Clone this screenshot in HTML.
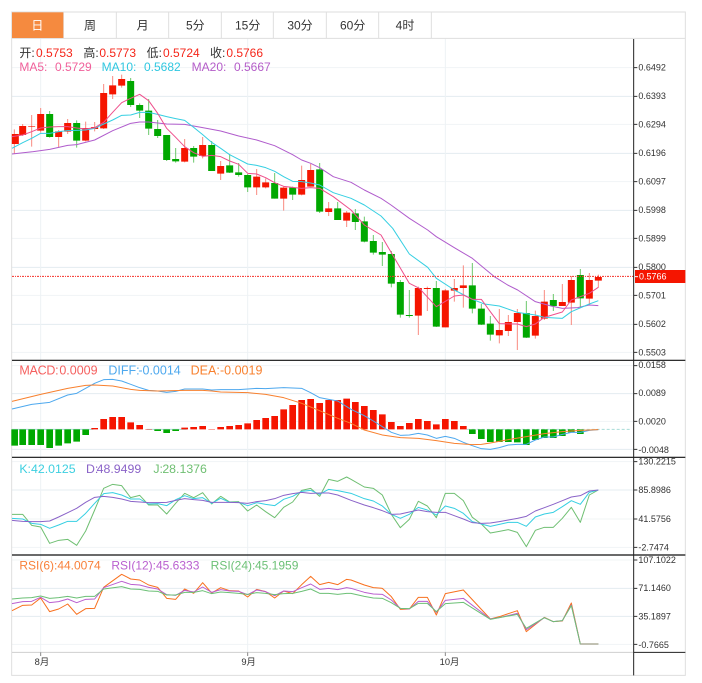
<!DOCTYPE html>
<html lang="zh"><head><meta charset="utf-8"><title>K线图</title>
<style>
html,body{margin:0;padding:0;background:#fff;width:702px;height:683px;overflow:hidden}
svg{display:block}
text{font-family:"Liberation Sans","Noto Sans CJK SC",sans-serif}
.ax text{font-size:27px;fill:#333}
.l{fill:none;stroke-width:3;stroke-linejoin:round}
</style></head><body>
<svg xmlns="http://www.w3.org/2000/svg" width="702" height="683" viewBox="0 0 2106 2049">
<!-- grid -->
<g fill="none" stroke-width="3">
<path stroke="#f1f4f6" d="M36 203H1901M36 373H1901M36 545H1901M36 715H1901M36 886H1901M36 1057H1901M36 1097H1901M36 1264H1901M36 1385H1901M36 1557H1901M36 1642H1901M36 1680H1901M36 1933H1901"/>
<path stroke="#e4ecf1" d="M36 289H1901M36 460H1901M36 631H1901M36 802H1901M36 973H1901M36 1181H1901M36 1348H1901M36 1470H1901M36 1765H1901M36 1849H1901"/>
<path stroke="#edf2f5" d="M122 116V1957M743 116V1957M1336 116V1957"/>
</g>
<!-- frame -->
<path fill="none" stroke="#dedede" stroke-width="3" d="M35 36H2056V2026H35Z"/>
<path fill="none" stroke="#dedede" stroke-width="3" d="M36 115H2056M190 36V115M349 36V115M506 36V115M664 36V115M820 36V115M979 36V115M1136 36V115M1294 36V115"/>
<rect x="36" y="37" width="154" height="77" fill="#f58a3f"/>
<g font-size="36" fill="#333" text-anchor="middle">
<text x="112" y="89" fill="#fff">日</text><text x="270" y="89">周</text><text x="428" y="89">月</text><text x="586" y="89">5分</text><text x="743" y="89">15分</text><text x="900" y="89">30分</text><text x="1058" y="89">60分</text><text x="1215" y="89">4时</text>
</g>
<!-- candle wicks -->
<path fill="none" stroke="#f98a80" stroke-width="3" d="M43 388V462M68 372V408M95 345V440M122 324V398M176 390V443M203 357V402M257 365V424M284 366V394M311 252V387M338 228V297M365 224V263M554 417V487M608 411V475M662 483V540M770 507V585M797 535V565M851 560V632M905 497V586M932 492V560M986 606V648M1040 633V681M1255 860V1005M1282 860V933M1336 867V982M1363 837V905M1390 796V923M1498 927V1030M1525 945V1008M1552 927V1050M1606 932V1016M1633 870V960M1687 852V918M1714 828V975M1768 819V915M1795 824V863"/>
<path fill="none" stroke="#6cc86c" stroke-width="3" d="M149 333V413M230 361V443M392 234V321M419 310V354M446 297V405M473 360V414M500 405V483M527 444V488M581 438V488M635 423V513M689 462V519M716 489V530M743 522V576M824 519V596M878 560V600M959 489V639M1013 606V660M1066 627V690M1093 650V727M1120 705V764M1147 726V798M1174 753V862M1201 840V953M1228 870V953M1309 843V981M1417 789V940M1444 912V975M1471 948V1022M1579 903V1014M1660 882V933M1741 807V924"/>
<!-- candle bodies -->
<path fill="none" stroke="#f51500" stroke-width="21" d="M46 402V432M68 378V405M95 378V380M122 342V392M176 394V411M203 369V395M257 384V422M284 381V387M311 279V385M338 256V283M365 237V257M554 444V485M608 435V468M662 498V521M770 530V562M797 547V562M851 563V596M905 540V584M932 510V560M986 625V636M1040 638V662M1255 864V947M1282 864V867M1336 871V982M1363 864V872M1390 856V864M1498 990V1006M1525 966V993M1552 939V966M1606 948V1007M1633 905V956M1687 906V918M1714 840V908M1768 840V896M1795 831V842"/>
<path fill="none" stroke="#00a800" stroke-width="21" d="M149 342V411M230 369V422M392 243V315M419 315V332M446 332V386M473 387V408M500 405V480M527 477V484M581 444V470M635 435V513M689 496V518M716 517V525M743 525V562M824 549V596M878 563V584M959 508V635M1013 625V660M1066 640V666M1093 664V725M1120 723V758M1147 756V764M1174 762V851M1201 846V944M1228 945V948M1309 864V980M1417 856V926M1444 926V974M1471 971V1004M1579 939V1013M1660 900V918M1741 825V895"/>
<!-- MAs -->
<path class="l" stroke="#b05ccc" d="M36 462L100 455L149 448L203 436L230 434L284 420L338 392L392 370L419 366L446 366L500 372L554 373L608 383L662 393L716 408L770 420L824 437L878 464L905 480L932 490L959 503L1000 530L1053 547L1093 570L1143 595L1173 615L1228 655L1283 690L1309 710L1363 743L1417 775L1453 805L1483 830L1523 855L1553 870L1606 905L1653 918L1687 925L1733 923L1768 915L1795 917"/>
<path class="l" stroke="#35cfe2" d="M36 445L68 428L95 415L122 400L149 400L176 395L203 392L230 391L257 390L284 385L311 372L338 360L365 346L392 345L419 337L446 337L473 343L500 350L527 356L554 361L581 382L608 404L635 427L662 445L689 464L716 478L743 492L770 496L797 503L824 514L851 530L878 544L905 545L932 549L959 555L1000 578L1053 595L1093 615L1143 648L1178 685L1228 762L1283 802L1309 835L1363 870L1417 898L1453 912L1498 918L1552 937L1606 945L1633 952L1687 955L1714 935L1768 912L1795 902"/>
<path class="l" stroke="#ee4f8c" d="M36 410L68 405L95 395L122 384L149 381L176 380L203 380L230 384L257 387L284 383L311 367L338 337L365 308L392 295L419 283L446 302L473 340L500 385L527 412L554 440L581 458L608 469L635 466L662 470L689 483L716 493L743 520L770 522L797 533L824 548L851 559L878 562L905 565L932 563L959 565L1000 590L1053 630L1093 675L1143 705L1178 765L1228 850L1258 865L1309 920L1363 888L1390 885L1417 898L1444 898L1471 935L1498 971L1552 972L1579 980L1606 972L1633 952L1687 936L1714 900L1768 880L1795 862"/>
<!-- last price line -->
<path fill="none" stroke="#f5302a" stroke-width="3" stroke-dasharray="6 3 3 3" d="M36 829H1905"/>
<!-- separators -->
<path fill="none" stroke="#111" stroke-width="3.5" d="M36 1081H2056M36 1372H2056M36 1665H2056"/>
<path fill="none" stroke="#cfcfcf" stroke-width="3" d="M36 1957H1901"/>
<path fill="none" stroke="#222" stroke-width="3" d="M1901 117V2026M1901 1957H2056"/>
<path fill="none" stroke="#888" stroke-width="3" d="M122 1957V1968M743 1957V1968M1336 1957V1968"/>

<!-- top text -->
<g font-size="36" fill="#333">
<text x="58" y="171">开:</text><text x="108" y="171" fill="#f5261a">0.5753</text>
<text x="250" y="171">高:</text><text x="298" y="171" fill="#f5261a">0.5773</text>
<text x="440" y="171">低:</text><text x="489" y="171" fill="#f5261a">0.5724</text>
<text x="630" y="171">收:</text><text x="679" y="171" fill="#f5261a">0.5766</text>
<g fill="#f0609a"><text x="58" y="213">MA5:</text><text x="165" y="213">0.5729</text></g>
<g fill="#2fc7e0"><text x="305" y="213">MA10:</text><text x="432" y="213">0.5682</text></g>
<g fill="#b45cc8"><text x="575" y="213">MA20:</text><text x="702" y="213">0.5667</text></g>
</g>

<!-- price axis -->
<g class="ax">
<path fill="none" stroke="#333" stroke-width="3" d="M1901 203H1912M1901 289H1912M1901 373H1912M1901 460H1912M1901 545H1912M1901 631H1912M1901 715H1912M1901 802H1912M1901 886H1912M1901 973H1912M1901 1057H1912M1901 1097H1912M1901 1181H1912M1901 1264H1912M1901 1348H1912M1901 1385H1912M1901 1470H1912M1901 1557H1912M1901 1642H1912M1901 1680H1912M1901 1765H1912M1901 1849H1912M1901 1933H1912"/>
<text x="1915" y="212">0.6492</text><text x="1915" y="297">0.6393</text><text x="1915" y="382">0.6294</text><text x="1915" y="468">0.6196</text><text x="1915" y="554">0.6097</text><text x="1915" y="639">0.5998</text><text x="1915" y="724">0.5899</text><text x="1915" y="810">0.5800</text><text x="1915" y="895">0.5701</text><text x="1915" y="981">0.5602</text><text x="1915" y="1066">0.5503</text>
<text x="1915" y="1104">0.0158</text><text x="1915" y="1188">0.0089</text><text x="1915" y="1273">0.0020</text><text x="1915" y="1359">-0.0048</text>
<text x="1915" y="1394">130.2215</text><text x="1915" y="1479">85.8986</text><text x="1915" y="1566">41.5756</text><text x="1915" y="1652">-2.7474</text>
<text x="1915" y="1689">107.1022</text><text x="1915" y="1773">71.1460</text><text x="1915" y="1858">35.1897</text><text x="1915" y="1944">-0.7665</text>
</g>
<rect x="1905" y="810" width="151" height="39" fill="#f51500"/>
<path stroke="#fff" stroke-width="3" d="M1905 830H1914"/>
<text x="1917" y="839" font-size="27" fill="#fff">0.5766</text>

<!-- MACD -->
<g transform="translate(0,1065)">
<g font-size="37.5">
<g fill="#f5605f"><text x="58" y="59" textLength="118">MACD:</text><text x="178" y="59">0.0009</text></g>
<g fill="#4da8ee"><text x="325" y="59">DIFF:</text><text x="415" y="59">-0.0014</text></g>
<g fill="#f8802e"><text x="572" y="59">DEA:</text><text x="660" y="59">-0.0019</text></g>
</g>
<path fill="none" stroke="#a8dcd8" stroke-width="3" d="M36 223H280M440 223H560"/>
<path fill="none" stroke="#a8dcd8" stroke-width="3" stroke-dasharray="9 6" d="M1400 223H1893"/>
<path fill="none" stroke="#f51500" stroke-width="20" d="M284 223V219M311 223V192M338 223V186M365 223V186M392 223V202M419 223V210M446 223V222M554 223V218M581 223V216M608 223V213M635 223V222M662 223V216M689 223V213M716 223V210M743 223V205M770 223V195M797 223V189M824 223V183M851 223V163M878 223V150M905 223V135M932 223V132M959 223V144M986 223V135M1013 223V135M1040 223V131M1066 223V141M1093 223V153M1120 223V165M1147 223V178M1174 223V201M1201 223V213M1228 223V204M1255 223V192M1282 223V198M1309 223V208M1336 223V192M1363 223V198M1390 223V213"/>
<path fill="none" stroke="#00a800" stroke-width="20" d="M44 223V272M68 223V270M95 223V270M122 223V270M149 223V279M176 223V272M203 223V265M230 223V260M257 223V240M473 223V228M500 223V234M527 223V228M1417 223V237M1444 223V252M1471 223V261M1498 223V261M1525 223V261M1552 223V262M1579 223V270M1606 223V255M1633 223V249M1660 223V249M1687 223V243M1714 223V232M1741 223V237"/>
<path class="l" stroke="#4da8ee" d="M36 162L95 148L149 142L203 120L230 115L257 100L284 85L311 74L338 73L365 78L392 88L419 98L446 106L473 108L500 112L527 109L554 102L608 102L635 105L662 104L716 104L770 100L797 101L851 98L905 100L932 113L959 128L986 133L1013 138L1053 163L1093 182L1120 198L1147 215L1174 232L1201 241L1228 240L1255 235L1282 240L1309 250L1336 244L1363 250L1390 262L1417 272L1444 281L1471 283L1498 278L1525 270L1552 268L1579 268L1606 255L1633 246L1660 246L1687 238L1714 232L1741 232L1768 226L1795 224"/>
<path class="l" stroke="#f8802e" d="M36 139L122 118L203 100L257 91L284 90L338 93L392 103L419 106L473 108L554 106L608 106L635 108L662 111L743 113L797 118L851 128L905 145L959 167L1013 190L1053 205L1093 225L1147 240L1201 248L1255 250L1309 257L1363 265L1417 269L1444 268L1471 264L1525 254L1579 245L1633 236L1687 230L1741 226L1795 224"/>
</g>

<!-- KDJ -->
<g transform="translate(0,1365)">
<g font-size="37">
<g fill="#3ccfe0"><text x="58" y="54">K:</text><text x="93" y="54">42.0125</text></g>
<g fill="#8a63c8"><text x="258" y="54">D:</text><text x="290" y="54">48.9499</text></g>
<g fill="#6fbf72"><text x="460" y="54">J:</text><text x="487" y="54">28.1376</text></g>
</g>
<path class="l" stroke="#6fbf72" d="M36 178L68 178L95 211L122 216L149 265L176 256L203 253L230 271L257 228L284 165L311 100L338 88L365 92L392 128L419 121L446 150L473 150L500 177L527 145L554 115L581 128L608 113L635 147L662 124L689 141L716 140L743 168L770 150L797 170L824 188L851 157L878 141L905 106L932 100L959 124L986 73L1013 79L1040 66L1053 73L1093 96L1120 100L1147 120L1174 178L1201 218L1228 193L1255 139L1282 153L1309 188L1336 115L1363 115L1390 137L1417 187L1444 207L1471 234L1498 229L1525 224L1552 232L1579 275L1606 226L1633 217L1660 217L1687 190L1714 157L1741 202L1768 120L1795 105"/>
<path class="l" stroke="#35cfe2" d="M36 190L68 192L95 205L122 208L149 220L176 210L203 199L230 199L257 175L284 145L311 116L338 113L365 120L392 132L419 132L446 147L473 146L500 152L527 134L554 122L581 131L608 128L635 145L662 130L689 142L716 142L743 152L770 143L797 148L824 152L851 133L878 124L905 109L932 106L959 118L986 103L1013 107L1053 115L1093 131L1120 138L1147 153L1174 178L1201 190L1228 178L1255 157L1282 165L1309 180L1336 153L1363 160L1390 175L1417 200L1444 207L1471 214L1498 208L1525 202L1552 202L1579 214L1606 186L1633 177L1660 172L1687 155L1714 137L1741 148L1768 112L1795 105"/>
<path class="l" stroke="#8a63c8" d="M36 196L68 199L95 200L122 200L149 198L176 186L203 173L230 160L257 142L284 127L311 124L338 127L365 132L392 139L419 141L446 143L473 143L500 142L527 136L554 131L581 134L608 136L635 142L662 142L689 142L716 143L743 145L770 140L797 137L824 131L851 121L878 116L905 112L932 115L959 114L986 114L1013 120L1053 136L1093 150L1120 158L1147 167L1174 178L1201 177L1228 171L1255 165L1282 170L1309 172L1336 172L1363 182L1390 192L1417 203L1444 205L1471 204L1498 200L1525 195L1552 190L1579 184L1606 168L1633 158L1660 148L1687 137L1714 126L1741 122L1768 108L1795 105"/>
</g>

<!-- RSI -->
<g transform="translate(0,1665)">
<g font-size="36">
<g fill="#f8803a"><text x="58" y="44">RSI(6):</text><text x="172" y="44">44.0074</text></g>
<g fill="#b95fcf"><text x="334" y="44">RSI(12):</text><text x="468" y="44">45.6333</text></g>
<g fill="#6cc076"><text x="632" y="44">RSI(24):</text><text x="765" y="44">45.1959</text></g>
</g>
<path class="l" stroke="#f8701e" d="M36 167L68 151L95 150L122 129L149 170L176 162L203 147L230 178L257 161L284 160L311 97L365 58L392 72L419 75L446 90L473 97L500 130L527 133L554 102L581 115L608 83L635 114L662 98L689 107L716 108L743 126L770 103L797 110L824 129L851 108L878 116L905 89L932 64L959 89L986 82L1013 89L1040 73L1053 75L1093 90L1120 98L1147 100L1174 125L1201 163L1228 162L1255 127L1282 127L1309 180L1336 116L1390 105L1471 192L1498 185L1552 167L1579 230L1633 187L1660 200L1687 198L1714 144L1741 267L1795 267"/>
<path class="l" stroke="#b95fcf" d="M36 146L68 140L95 139L122 127L149 143L176 140L203 132L230 143L257 133L284 132L311 98L365 79L392 88L419 90L446 97L473 102L500 119L527 121L554 106L581 111L608 96L635 112L662 104L689 108L716 109L743 119L770 105L797 110L824 122L851 108L878 110L905 98L932 87L959 103L986 100L1013 104L1040 98L1053 100L1093 112L1120 117L1147 118L1174 135L1201 160L1228 162L1255 139L1282 139L1309 172L1336 136L1390 130L1471 192L1498 188L1552 175L1579 224L1633 188L1660 200L1687 197L1714 150L1741 267L1795 267"/>
<path class="l" stroke="#6cc076" d="M36 132L68 129L95 128L122 123L149 130L176 128L203 124L230 129L257 124L284 124L311 102L365 95L392 102L419 103L446 108L473 109L500 120L527 120L554 112L581 112L608 107L635 116L662 111L689 113L716 115L743 118L770 113L797 115L824 119L851 116L878 115L905 109L932 102L959 115L986 115L1013 118L1040 115L1053 115L1093 124L1120 129L1147 130L1174 143L1201 160L1228 161L1255 145L1282 145L1309 170L1336 146L1390 142L1471 193L1498 188L1552 178L1579 220L1633 188L1660 200L1687 197L1714 152L1741 267L1795 267"/>
<path fill="none" stroke="#b9b9a8" stroke-width="5" d="M1741 267H1795"/>
<g font-size="28" fill="#333">
<text x="104" y="330">8月</text><text x="724" y="330">9月</text><text x="1319" y="330">10月</text>
</g>
</g>
</svg>
</body></html>
